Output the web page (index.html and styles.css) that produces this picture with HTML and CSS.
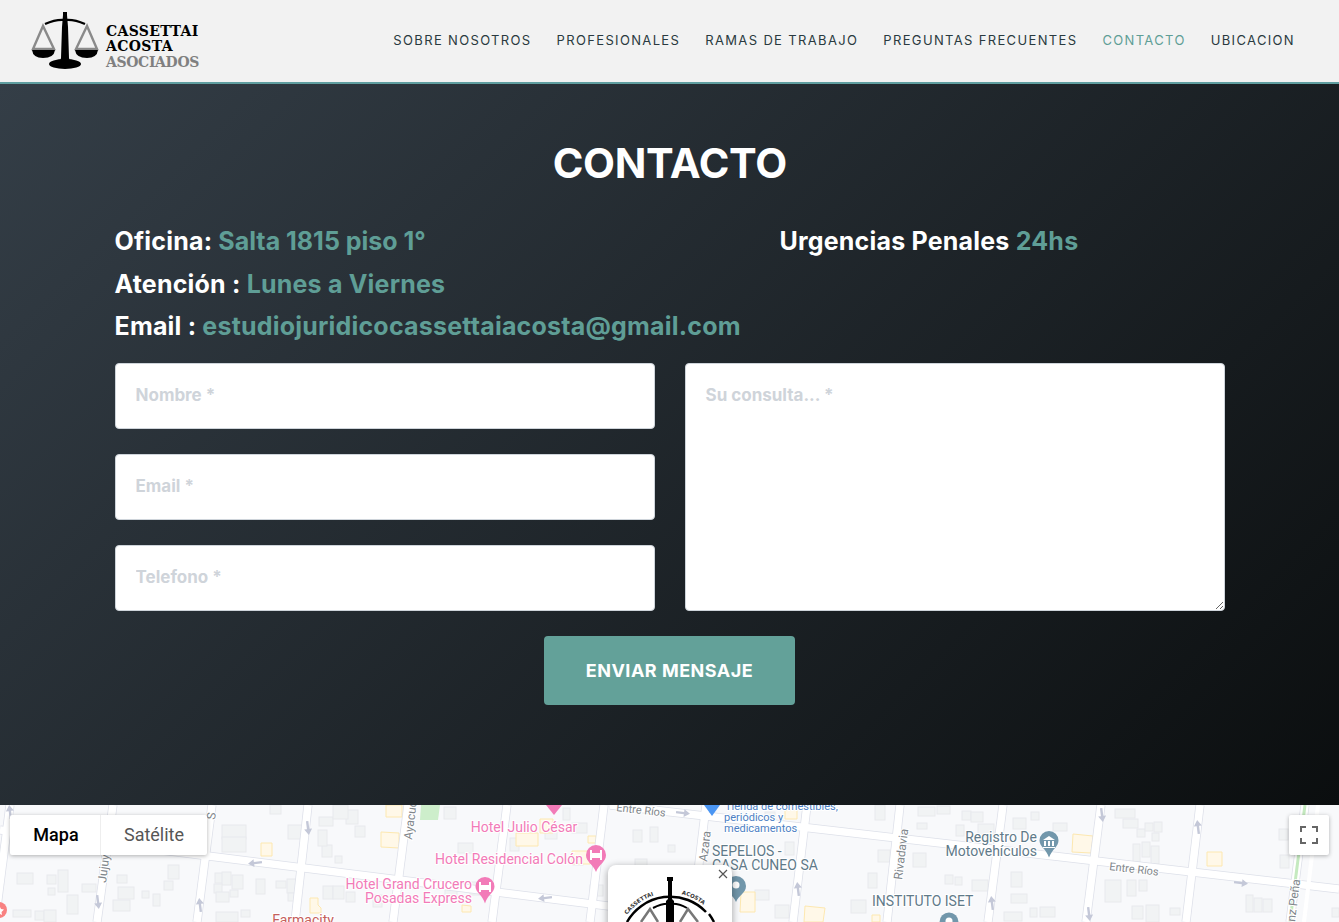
FILE: index.html
```html
<!DOCTYPE html>
<html lang="es">
<head>
<meta charset="utf-8">
<title>Contacto</title>
<link rel="stylesheet" href="styles.css">
</head>
<body>
<header class="topbar">
  <a class="brand" href="#">
    <svg class="brand-mark" viewBox="0 0 76 60" width="76" height="60">
      <g fill="none" stroke="#8a8a8a" stroke-width="2.4">
        <path d="M13 15 L3 38 H24 Z"/>
        <path d="M57 15 L46 38 H67 Z"/>
      </g>
      <path d="M2 39 H25 Q24 47 13 47 Q3 47 2 39Z" fill="#000"/>
      <path d="M45 39 H68 Q67 47 57 47 Q46 47 45 39Z" fill="#000"/>
      <path d="M15 13 Q26 8 35 9 Q44 8 55 13" fill="none" stroke="#000" stroke-width="2.4"/>
      <path d="M33 1 H37 V4 L38 16 L39 47 L40 50 H30 L31 47 L32 16 L33 4Z" fill="#000"/>
      <ellipse cx="35" cy="53" rx="16" ry="5" fill="#000"/>
    </svg>
    <span class="brand-text"><b>CASSETTAI</b><b>ACOSTA</b><b class="brand-sub">ASOCIADOS</b></span>
  </a>
  <nav class="nav">
    <a href="#">SOBRE NOSOTROS</a>
    <a href="#">PROFESIONALES</a>
    <a href="#">RAMAS DE TRABAJO</a>
    <a href="#">PREGUNTAS FRECUENTES</a>
    <a href="#" class="active">CONTACTO</a>
    <a href="#">UBICACION</a>
  </nav>
</header>

<main class="contact">
  <h1>CONTACTO</h1>
  <div class="info">
    <div class="info-left">
      <p>Oficina: <span class="tight">Salta 1815 piso 1°</span></p>
      <p>Atención : <span>Lunes a Viernes</span></p>
      <p>Email : <span>estudiojuridicocassettaiacosta@gmail.com</span></p>
    </div>
    <div class="info-right">
      <p>Urgencias Penales <span>24hs</span></p>
    </div>
  </div>
  <form class="form">
    <div class="fields">
      <input type="text" placeholder="Nombre *">
      <input type="text" placeholder="Email *">
      <input type="text" placeholder="Telefono *">
    </div>
    <textarea placeholder="Su consulta... *"></textarea>
    <button type="button">ENVIAR MENSAJE</button>
  </form>
</main>

<section class="map">
  <svg class="map-canvas" viewBox="0 805 1339 117" width="1339" height="117">
    <defs>
      <path id="arrow-up" d="M0 -7 L4 -1 H1.200 V7 H-1.200 V-1 H-4Z"/>
    </defs>
    <g class="buildings">
      <rect x="222" y="825" width="24" height="14"/><rect x="222" y="837" width="24" height="15"/><rect x="288" y="825" width="14" height="14"/><rect x="270" y="805" width="11" height="9"/>
      <rect x="17" y="873" width="16" height="11"/><rect x="47" y="875" width="9" height="9"/><rect x="58" y="870" width="10" height="22"/><rect x="48" y="888" width="7" height="7"/><rect x="82" y="884" width="14" height="8"/>
      <rect x="67" y="895" width="11" height="19"/><rect x="13" y="910" width="18" height="7"/><rect x="35" y="911" width="9" height="9"/><rect x="44" y="910" width="12" height="12"/>
      <rect x="117" y="875" width="10" height="8"/><rect x="118" y="887" width="16" height="12"/><rect x="113" y="900" width="17" height="11"/><rect x="142" y="891" width="7" height="7"/><rect x="153" y="894" width="7" height="12"/><rect x="164" y="881" width="9" height="9"/><rect x="168" y="865" width="11" height="14"/>
      <rect x="215" y="873" width="8" height="10"/><rect x="222" y="872" width="9" height="13"/><rect x="232" y="875" width="11" height="14"/><rect x="214" y="884" width="8" height="9"/><rect x="216" y="892" width="13" height="10"/><rect x="230" y="890" width="8" height="7"/><rect x="256" y="879" width="9" height="15"/><rect x="276" y="881" width="10" height="7"/><rect x="287" y="879" width="9" height="14"/><rect x="288" y="893" width="8" height="8"/><rect x="216" y="912" width="22" height="10"/><rect x="241" y="910" width="9" height="7"/>
      <rect x="322" y="845" width="10" height="12"/><rect x="318" y="830" width="9" height="16"/><rect x="335" y="856" width="7" height="7"/><rect x="319" y="817" width="14" height="9"/><rect x="346" y="810" width="12" height="14"/><rect x="333" y="805" width="15" height="14"/><rect x="355" y="826" width="10" height="11"/>
      <rect x="323" y="886" width="10" height="13"/><rect x="333" y="886" width="11" height="13"/><rect x="346" y="892" width="9" height="10"/><rect x="373" y="895" width="9" height="12"/><rect x="444" y="807" width="12" height="12"/><rect x="445" y="888" width="12" height="8"/><rect x="470" y="882" width="19" height="13"/><rect x="510" y="838" width="9" height="13"/>
      <rect x="563" y="808" width="7" height="12"/><rect x="572" y="823" width="15" height="10"/><rect x="573" y="855" width="10" height="10"/><rect x="590" y="885" width="13" height="11"/><rect x="458" y="843" width="15" height="10"/><rect x="545" y="830" width="12" height="9"/>
      <rect x="633" y="830" width="9" height="12"/><rect x="650" y="827" width="8" height="15"/><rect x="668" y="845" width="7" height="7"/><rect x="635" y="859" width="12" height="8"/><rect x="755" y="890" width="14" height="10"/><rect x="775" y="905" width="14" height="13"/><rect x="765" y="812" width="10" height="12"/><rect x="875" y="805" width="10" height="15"/><rect x="878" y="850" width="12" height="12"/><rect x="868" y="873" width="9" height="15"/><rect x="851" y="900" width="15" height="13"/><rect x="785" y="842" width="9" height="13"/>
      <rect x="918" y="807" width="17" height="9"/><rect x="937" y="806" width="13" height="8"/><rect x="962" y="811" width="9" height="9"/><rect x="971" y="812" width="12" height="10"/><rect x="917" y="823" width="10" height="6"/><rect x="956" y="825" width="8" height="11"/><rect x="978" y="824" width="16" height="13"/><rect x="1013" y="818" width="13" height="11"/><rect x="1031" y="812" width="8" height="8"/><rect x="1053" y="823" width="14" height="8"/><rect x="913" y="853" width="13" height="14"/><rect x="945" y="875" width="8" height="9"/><rect x="955" y="877" width="7" height="8"/><rect x="972" y="880" width="16" height="11"/><rect x="1011" y="872" width="11" height="15"/>
      <rect x="1011" y="894" width="16" height="9"/><rect x="1004" y="912" width="18" height="9"/><rect x="1030" y="908" width="7" height="9"/><rect x="1040" y="907" width="15" height="10"/>
      <rect x="1115" y="809" width="20" height="9"/><rect x="1123" y="819" width="15" height="9"/><rect x="1137" y="829" width="8" height="8"/><rect x="1145" y="823" width="8" height="8"/><rect x="1154" y="822" width="8" height="10"/><rect x="1152" y="833" width="7" height="8"/><rect x="1133" y="844" width="7" height="18"/><rect x="1142" y="842" width="8" height="15"/><rect x="1151" y="846" width="8" height="18"/>
      <rect x="1105" y="880" width="16" height="22"/><rect x="1127" y="880" width="9" height="16"/><rect x="1139" y="880" width="8" height="11"/><rect x="1132" y="906" width="11" height="13"/><rect x="1146" y="905" width="13" height="17"/><rect x="1170" y="908" width="10" height="7"/>
      <rect x="1279" y="829" width="9" height="11"/><rect x="1280" y="855" width="9" height="13"/><rect x="1246" y="895" width="7" height="17"/><rect x="1254" y="898" width="8" height="14"/><rect x="1263" y="899" width="9" height="13"/><rect x="1332" y="908" width="7" height="9"/>
    </g>
    <g class="yellow">
      <path d="M261 843 H272 V856 H261Z"/>
      <path d="M381 832 L399 833 V848 L381 847Z"/>
      <path d="M386 805 H402 V817 H386Z"/>
      <path d="M310 898 H318 V905 L321 908 V913 H310Z"/>
      <path d="M516 833 H538 V846 H516Z"/>
      <path d="M540 819 H553 V833 H540Z"/>
      <path d="M588 836 H596 V843 H588Z"/>
      <path d="M572 851 H590 V864 H572Z"/>
      <path d="M462 905 L471 906 V912 H462Z"/>
      <path d="M741 892 H755 V912 H740Z"/>
      <path d="M805 906 L825 908 L823 922 H804Z"/>
      <path d="M872 915 H880 V922 H872Z"/>
      <path d="M1073 834 L1093 836 L1091 853 L1072 852Z"/>
      <path d="M1207 852 H1222 V866 H1207Z"/>
      <path d="M785 810 H797 V819 H785Z"/>
    </g>
    <path class="park" d="M421 805 H440 L438 820 H420Z"/>
    <g class="road-edge">
      <path d="M610 805 L1339 889"/>
      <path d="M0 830 L720 920"/>
      <path d="M10 805 L-5 922"/><path d="M113 805 L97 922"/><path d="M212 805 L197 922"/><path d="M308 805 L295 922"/><path d="M408 805 L393 922"/><path d="M507 805 L492 922"/><path d="M604 805 L590 922"/><path d="M706 805 L692 922"/><path d="M807 805 L793 922"/><path d="M900 805 L887 922"/><path d="M1003 805 L988 922"/><path d="M1101 805 L1086 922"/><path d="M1200 805 L1186 922"/><path d="M1305 805 L1290 922"/>
    </g>
    <g class="road">
      <path d="M610 805 L1339 889"/>
      <path d="M0 830 L720 920"/>
      <path d="M10 805 L-5 922"/><path d="M113 805 L97 922"/><path d="M212 805 L197 922"/><path d="M308 805 L295 922"/><path d="M408 805 L393 922"/><path d="M507 805 L492 922"/><path d="M604 805 L590 922"/><path d="M706 805 L692 922"/><path d="M807 805 L793 922"/><path d="M900 805 L887 922"/><path d="M1003 805 L988 922"/><path d="M1101 805 L1086 922"/><path d="M1200 805 L1186 922"/><path d="M1305 805 L1290 922"/>
      <path class="road-thin" d="M1318 805 L1304 922"/>
    </g>
    <path class="road-green" d="M1305 805 L1290 922"/>
    <g class="arrows">
      <use href="#arrow-up" transform="translate(10 812) rotate(-7)"/>
      <use href="#arrow-up" transform="translate(308 828) rotate(173)"/>
      <use href="#arrow-up" transform="translate(98 902) rotate(173)"/>
      <use href="#arrow-up" transform="translate(200 905) rotate(-7)"/>
      <use href="#arrow-up" transform="translate(255 863) rotate(-97)"/>
      <use href="#arrow-up" transform="translate(545 898) rotate(-97)"/>
      <use href="#arrow-up" transform="translate(683 813) rotate(97)"/>
      <use href="#arrow-up" transform="translate(798 889) rotate(-7)"/>
      <use href="#arrow-up" transform="translate(1102 815) rotate(173)"/>
      <use href="#arrow-up" transform="translate(1198 827) rotate(-7)"/>
      <use href="#arrow-up" transform="translate(992 903) rotate(-7)"/>
      <use href="#arrow-up" transform="translate(1089 914) rotate(173)"/>
      <use href="#arrow-up" transform="translate(1241 883) rotate(97)"/>
    </g>
    <g class="street-label">
      <text class="street-small" x="616" y="811" transform="rotate(6.5 616 811)">Entre Ríos</text>
      <text class="street-small" x="1109" y="870" transform="rotate(6.5 1109 870)">Entre Ríos</text>
      <text x="215" y="820" transform="rotate(-83 215 820)">S</text>
      <text x="412" y="840" transform="rotate(-83 412 840)">Ayacucho</text>
      <text x="106" y="883" transform="rotate(-83 106 883)">Jujuy</text>
      <text x="707" y="862" transform="rotate(-83 707 862)">Azara</text>
      <text x="902" y="880" transform="rotate(-83 902 880)">Rivadavia</text>
      <text x="1295" y="922" transform="rotate(-83 1295 922)">nz Peña</text>
    </g>
    <g class="pin-pink">
      <path d="M546 805 H562 L554 815Z"/>
      <path d="M596 845 a10 10 0 0 1 10 10 c0 7 -7 9 -10 17 c-3 -8 -10 -10 -10 -17 a10 10 0 0 1 10 -10Z"/>
      <path d="M485 877 a9.500 9.500 0 0 1 9.500 9.500 c0 6 -7 8 -9.500 17 c-2.500 -9 -9.500 -11 -9.500 -17 a9.500 9.500 0 0 1 9.500 -9.500Z"/>
    </g>
    <g class="bed">
      <path d="M590 850 H592 V853 H600 V850 H602 V860 H600 V858 H592 V860 H590Z"/>
      <path d="M479 882 H481 V885 H489 V882 H491 V892 H489 V890 H481 V892 H479Z"/>
    </g>
    <path class="pin-blue" d="M704 805 H720 L712 816Z"/>
    <path class="pin-slate" d="M736 876 a10 10 0 0 1 10 10 c0 7 -7 9 -10 16 c-3 -7 -9 -9 -10 -16 a10 10 0 0 1 10 -10Z"/>
    <circle class="pin-hole" cx="736" cy="885" r="3.500"/>
    <path class="pin-slate" d="M1049 831 a9.500 9.500 0 0 1 9.500 9.500 c0 6 -6 8 -9.500 17 c-3 -9 -9.500 -11 -9.500 -17 a9.500 9.500 0 0 1 9.500 -9.500Z"/>
    <path class="pin-hole" d="M1043 840 L1049 836 L1055 840Z M1044 841 H1046 V846 H1044Z M1048 841 H1050 V846 H1048Z M1052 841 H1054 V846 H1052Z M1043 847 H1055 V848 H1043Z"/>
    <circle class="pin-slate" cx="949" cy="922" r="9.500"/>
    <circle class="pin-hole" cx="949" cy="921" r="3.500"/>
    <circle class="pin-red" cx="-1" cy="910" r="8"/>
    <path class="pin-hole" d="M-1 905 L1 909 L4 909.500 L1.500 912 L2 915 L-1 913.500Z"/>
    <g class="poi-pink">
      <text x="524" y="832" text-anchor="middle">Hotel Julio César</text>
      <text x="583" y="864" text-anchor="end">Hotel Residencial Colón</text>
      <text x="472" y="889" text-anchor="end">Hotel Grand Crucero</text>
      <text x="472" y="903" text-anchor="end">Posadas Express</text>
    </g>
    <text class="poi-red" x="303" y="925" text-anchor="middle">Farmacity</text>
    <g class="poi-blue">
      <text x="725" y="810">Tienda de comestibles,</text>
      <text x="724" y="821">periódicos y</text>
      <text x="724" y="832">medicamentos</text>
    </g>
    <g class="poi-slate">
      <text x="712" y="856">SEPELIOS -</text>
      <text x="712" y="870">CASA CUNEO SA</text>
      <text x="1037" y="842" text-anchor="end">Registro De</text>
      <text x="1037" y="856" text-anchor="end">Motovehículos</text>
      <text x="872" y="906">INSTITUTO ISET</text>
    </g>
  </svg>

  <div class="map-type">
    <span class="map-type-on">Mapa</span>
    <span>Satélite</span>
  </div>
  <button class="fullscreen" type="button" aria-label="Pantalla completa">
    <svg viewBox="0 0 18 18" width="18" height="18"><path d="M1 6 V1 H6 M12 1 H17 V6 M17 12 V17 H12 M6 17 H1 V12" fill="none" stroke="#666" stroke-width="2"/></svg>
  </button>
  <div class="info-window">
    <svg class="close" viewBox="0 0 10 10" width="10" height="10"><path d="M1 1 L9 9 M9 1 L1 9" stroke="#555" stroke-width="1.200"/></svg>
    <svg class="seal" viewBox="0 0 124 57" width="124" height="57">
      <defs><path id="seal-arc" d="M9 81 A53 53 0 0 1 115 81"/></defs>
      <text class="seal-text"><textPath href="#seal-arc" startOffset="20%">CASSETTAI</textPath></text>
      <text class="seal-text"><textPath href="#seal-arc" startOffset="57%">ACOSTA</textPath></text>
      <path d="M19 57 A49.500 49.500 0 0 1 98 47" fill="none" stroke="#000" stroke-width="2.500"/>
      <path d="M101 49 A49.500 49.500 0 0 1 106 57" fill="none" stroke="#000" stroke-width="2.500"/>
      <path d="M45 43 Q55 38 62 39 Q70 38 79 43" fill="none" stroke="#000" stroke-width="2"/>
      <path d="M33 57 L42 44 L50 57 M72 57 L80 44 L90 57" fill="none" stroke="#777" stroke-width="2.500"/>
      <path d="M59 12 H65 V16 H64 L64 34 L66 36 V57 H58 V36 L60 34 L60 16 H59Z" fill="#000"/>
    </svg>
  </div>
</section>
</body>
</html>
```

FILE: styles.css
```css
* { box-sizing: border-box; }

html, body {
  margin: 0;
  height: 922px;
  overflow: hidden;
  font-family: "Inter", "Liberation Sans", sans-serif;
  background: #f2f2f2;
}

.topbar {
  height: 84px;
  padding: 0 44px 0 30px;
  display: flex;
  align-items: center;
  justify-content: space-between;
  background: #f2f2f2;
  border-bottom: 2px solid #5f9ea0;
}

.brand {
  display: flex;
  align-items: center;
  text-decoration: none;
  color: #000;
}

.brand-mark { width: 76px; height: 60px; flex: none; }

.brand-text {
  display: flex;
  flex-direction: column;
  margin-top: 12px;
  font-family: "DejaVu Serif", serif;
  font-size: 14px;
  line-height: 15.500px;
  letter-spacing: 0.35px;
}

.brand-text b { font-weight: 700; }
.brand-sub { color: #808080; letter-spacing: -0.35px; }

.nav { display: flex; gap: 25px; margin-top: -2px; }

.nav a {
  font-size: 13px;
  font-weight: 400;
  letter-spacing: 1.350px;
  color: #2a3a40;
  text-decoration: none;
  white-space: nowrap;
}

.nav a.active { color: #5f9e96; }

.contact {
  height: 721px;
  padding: 0 114px 0 114.500px;
  display: flex;
  flex-direction: column;
  background: linear-gradient(135deg, #343e47 0%, #0b0e0f 100%);
  color: #fff;
}

.contact h1 {
  margin: 52px 0 0;
  font-size: 41.500px;
  line-height: 54px;
  font-weight: 700;
  text-align: center;
  letter-spacing: -0.3px;
}

.info {
  margin-top: 30px;
  display: grid;
  grid-template-columns: 665px 1fr;
}

.info p {
  margin: 0;
  height: 42.500px;
  font-size: 25px;
  line-height: 42.500px;
  font-weight: 700;
  letter-spacing: 0.2px;
  white-space: nowrap;
}

.info span { color: #5f9e96; }
.info .tight { letter-spacing: 0; }

.form {
  margin-top: 15px;
  display: grid;
  grid-template-columns: 540px 540px;
  column-gap: 30px;
  align-content: start;
  width: 1110px;
}

.fields {
  display: flex;
  flex-direction: column;
  gap: 25px;
}

input, textarea {
  display: block;
  width: 100%;
  border: 1px solid #ced4da;
  border-radius: 4px;
  background: #fff;
  padding: 0 20px;
  font-family: inherit;
  font-size: 17px;
  font-weight: 700;
  outline: none;
}

input { height: 66px; padding-bottom: 2px; }

textarea {
  height: 248px;
  padding-top: 21px;
  resize: vertical;
}

input::placeholder, textarea::placeholder { color: #cfd4da; opacity: 1; }

.form button {
  grid-column: 1 / -1;
  justify-self: center;
  margin-top: 25px;
  width: 251px;
  height: 69px;
  border: 0;
  border-radius: 4px;
  background: #63a199;
  color: #fff;
  font-family: inherit;
  font-size: 18px;
  font-weight: 700;
  letter-spacing: 0.5px;
}

.map {
  position: relative;
  height: 117px;
  overflow: hidden;
  background: #f8f9fb;
}

.map-canvas { display: block; }

.buildings rect { fill: #f1f3f4; stroke: #e8eaed; stroke-width: 1; }
.yellow path { fill: #fff8e8; stroke: #fde8b0; stroke-width: 1; }
.park { fill: #cdeecb; }
.road-edge path { fill: none; stroke: #dde0e9; stroke-width: 9; }
.road path { fill: none; stroke: #fff; stroke-width: 7.500; }
.road .road-thin { stroke-width: 4; }
.road-green { fill: none; stroke: #c5eac0; stroke-width: 3; }
.arrows use { fill: #c4c8d8; }

.street-label text {
  font-family: Roboto, sans-serif;
  font-size: 12px;
  fill: #80868b;
  stroke: #fff;
  stroke-width: 2px;
  paint-order: stroke;
}

.street-label .street-small { font-size: 11px; }

.pin-pink path { fill: #f27bb8; }
.bed path { fill: #fff; }
.pin-blue { fill: #4b96f3; }
.pin-slate { fill: #7297ab; }
.pin-hole { fill: #fff; }
.pin-red { fill: #f88181; }

.poi-pink text, .poi-red, .poi-blue text, .poi-slate text {
  font-family: Roboto, sans-serif;
  stroke: #fff;
  stroke-width: 2px;
  paint-order: stroke;
}

.poi-pink text { font-size: 14px; fill: #f27bb8; }
.poi-red { font-size: 14px; fill: #c5605c; }
.poi-blue text { font-size: 11px; fill: #4d7fc4; }
.poi-slate text { font-size: 14px; fill: #5f7a89; }

.map-type {
  position: absolute;
  left: 10px;
  top: 10px;
  height: 40px;
  display: flex;
  background: #fff;
  border-radius: 2px;
  box-shadow: 0 1px 4px rgba(0, 0, 0, 0.3);
  font-family: Roboto, sans-serif;
  font-size: 18px;
  color: #565656;
}

.map-type span {
  display: flex;
  align-items: center;
  justify-content: center;
  width: 106px;
  padding-bottom: 2px;
}

.map-type .map-type-on {
  width: 91px;
  padding-left: 2px;
  color: #000;
  font-weight: 500;
  border-right: 1px solid #eee;
}

.fullscreen {
  position: absolute;
  left: 1289px;
  top: 10px;
  width: 40px;
  height: 40px;
  padding: 0;
  border: 0;
  border-radius: 2px;
  background: #fff;
  box-shadow: 0 1px 4px rgba(0, 0, 0, 0.3);
  display: flex;
  align-items: center;
  justify-content: center;
}

.info-window {
  position: absolute;
  left: 608px;
  top: 60px;
  width: 124px;
  height: 70px;
  background: #fff;
  border-radius: 8px;
  box-shadow: 0 2px 7px 1px rgba(0, 0, 0, 0.3);
}

.close { position: absolute; top: 4px; right: 4px; z-index: 1; }
.seal { display: block; }
.seal-text { font-family: "DejaVu Sans", sans-serif; font-size: 5.500px; font-weight: 700; fill: #333; }
```
